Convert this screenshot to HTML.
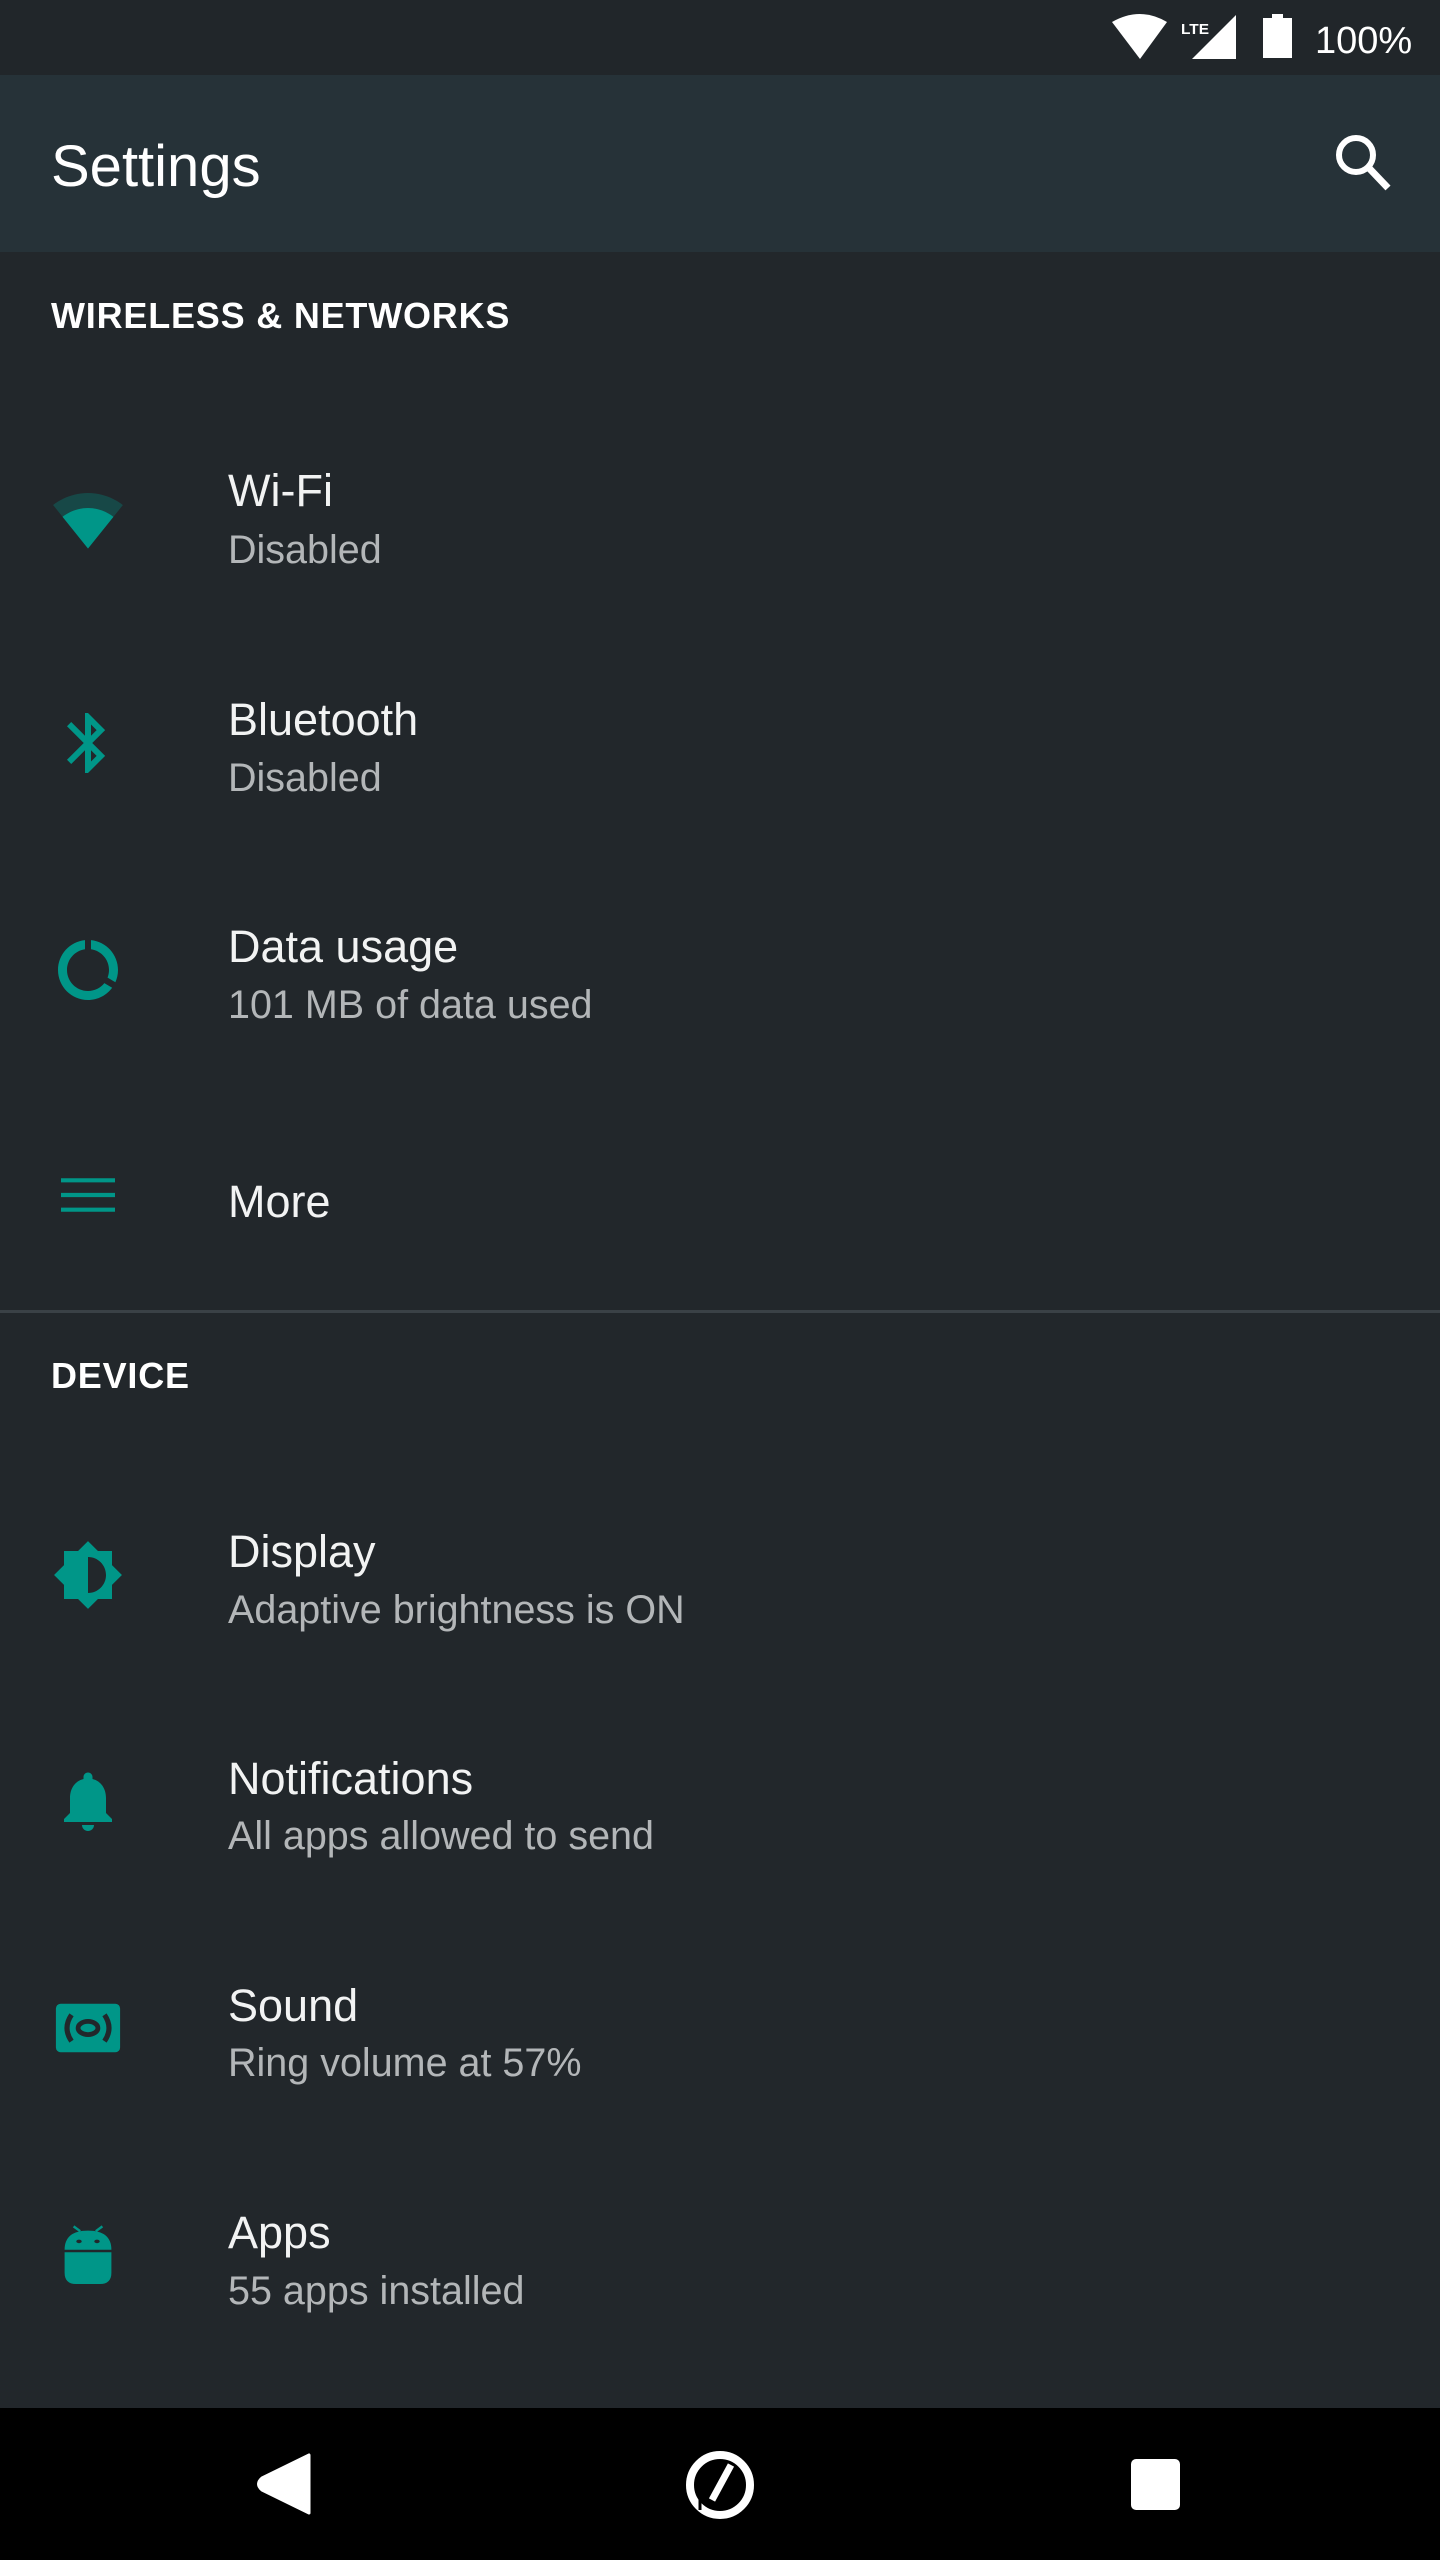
<!DOCTYPE html>
<html><head><meta charset="utf-8"><style>
*{margin:0;padding:0;box-sizing:border-box}
body{width:1440px;height:2560px;background:#22272b;position:relative;overflow:hidden;font-family:"Liberation Sans",sans-serif;color:#fff}
.a{position:absolute;white-space:nowrap}
.t{font-size:45px;color:#f2f3f3;left:228px;line-height:1}
.s{font-size:39.5px;color:#b3b6b8;left:228px;line-height:1;margin-top:4px}
.h{font-size:36px;font-weight:bold;left:51px;line-height:1;letter-spacing:0.8px}
svg.i{position:absolute;left:52px;width:72px;height:72px;fill:#009688}
</style></head><body>
<div class="a" style="left:0;top:0;width:1440px;height:75px;background:#21262a"></div>
<svg class="a" style="left:1100px;top:0" width="340" height="75" viewBox="1100 0 340 75">
<path d="M1112 22 Q1140 6 1167 22 L1140 59 Z" fill="#fff"/>
<text x="1181" y="34" font-family="Liberation Sans" font-weight="bold" font-size="15" fill="#fff" textLength="28" lengthAdjust="spacingAndGlyphs">LTE</text>
<path d="M1236 15 L1236 59 L1192 59 Z" fill="#fff"/>
<rect x="1272" y="14" width="11" height="5" fill="#fff"/><rect x="1263" y="18" width="29" height="40" fill="#fff"/>
<text x="1315" y="53" font-family="Liberation Sans" font-size="38" fill="#fff">100%</text>
</svg>
<div class="a" style="left:0;top:75px;width:1440px;height:177px;background:#263238"></div>
<div class="a" style="left:51px;top:138px;font-size:58px;line-height:1;color:#fff">Settings</div>
<svg class="a" style="left:1320px;top:120px" width="80" height="80" viewBox="1320 120 80 80"><circle cx="1356" cy="155" r="17" fill="none" stroke="#fff" stroke-width="6"/><path d="M1368 167 L1388 188" stroke="#fff" stroke-width="7"/></svg>

<div class="a h" style="top:298px">WIRELESS &amp; NETWORKS</div>

<svg class="i" style="top:484px" viewBox="0 0 24 24"><path opacity=".3" d="M12.01 21.49L23.64 7c-.45-.34-4.93-4-11.64-4C5.28 3 .81 6.66.36 7l11.63 14.49.01.01.01-.01z"/><path d="M3.53 10.95l8.46 10.54.01.01.01-.01 8.46-10.54C20.04 10.62 16.81 8 12 8c-4.81 0-8.04 2.62-8.47 2.95z"/></svg>
<div class="a t" style="top:468px">Wi-Fi</div><div class="a s" style="top:527px">Disabled</div>

<svg class="i" style="top:707px" viewBox="0 0 24 24"><path d="M17.71 7.71L12 2h-1v7.59L6.41 5 5 6.41 10.59 12 5 17.59 6.41 19 11 14.41V22h1l5.71-5.71-4.3-4.29 4.3-4.29zM13 5.83l1.88 1.88L13 9.59V5.83zm1.88 10.46L13 18.17v-3.76l1.88 1.88z"/></svg>
<div class="a t" style="top:697px">Bluetooth</div><div class="a s" style="top:755px">Disabled</div>

<svg class="i" style="top:934px" viewBox="0 0 24 24"><path d="M13 2.05v3.03c3.39.49 6 3.39 6 6.92 0 .9-.18 1.75-.48 2.54l2.6 1.53c.56-1.24.88-2.62.88-4.07 0-5.18-3.95-9.45-9-9.95zM12 19c-3.87 0-7-3.13-7-7 0-3.53 2.61-6.43 6-6.92V2.05c-5.06.5-9 4.76-9 9.95 0 5.52 4.47 10 9.99 10 3.31 0 6.24-1.61 8.06-4.09l-2.6-1.53C16.17 17.98 14.21 19 12 19z"/></svg>
<div class="a t" style="top:924px">Data usage</div><div class="a s" style="top:982px">101 MB of data used</div>

<svg class="i" style="top:1159px" viewBox="0 0 24 24"><path d="M3 17.6h18v-1.4H3zM3 12.7h18v-1.4H3zM3 6.4v1.4h18V6.4z"/></svg>
<div class="a t" style="top:1179px">More</div>

<div class="a" style="left:0;top:1310px;width:1440px;height:3px;background:#3a4146"></div>
<div class="a h" style="top:1358px">DEVICE</div>

<svg class="i" style="top:1539px" viewBox="0 0 24 24"><path fill-rule="evenodd" d="M20 15.31L23.31 12 20 8.69V4h-4.69L12 .69 8.69 4H4v4.69L.69 12 4 15.31V20h4.69L12 23.31 15.31 20H20v-4.69zM12 18V6c3.31 0 6 2.69 6 6s-2.69 6-6 6z"/></svg>
<div class="a t" style="top:1529px">Display</div><div class="a s" style="top:1587px">Adaptive brightness is ON</div>

<svg class="i" style="top:1765px" viewBox="0 0 24 24"><path d="M12 22c1.1 0 2-.9 2-2h-4c0 1.1.89 2 2 2zm6-6v-5c0-3.07-1.64-5.64-4.5-6.32V4c0-.83-.67-1.5-1.5-1.5s-1.5.67-1.5 1.5v.68C7.63 5.36 6 7.92 6 11v5l-2 2v1h16v-1l-2-2z"/></svg>
<div class="a t" style="top:1756px">Notifications</div><div class="a s" style="top:1813px">All apps allowed to send</div>

<svg class="i" style="top:1992px" viewBox="0 0 24 24"><rect x="1.3" y="3.9" width="21.4" height="16.2" rx="1.6"/><ellipse cx="12" cy="12" rx="3.3" ry="2.2" fill="none" stroke="#22272b" stroke-width="1.6"/><path d="M6.5 7.6 Q3.5 12 6.5 16.4" fill="none" stroke="#22272b" stroke-width="1.7"/><path d="M17.5 7.6 Q20.5 12 17.5 16.4" fill="none" stroke="#22272b" stroke-width="1.7"/></svg>
<div class="a t" style="top:1983px">Sound</div><div class="a s" style="top:2040px">Ring volume at 57%</div>

<svg class="i" style="top:2218px" viewBox="0 0 24 24"><path d="M4.2 10.6 Q4.2 4.2 12 4.2 Q19.8 4.2 19.8 10.6Z"/><path d="M4.2 11.4h15.6v6.8q0 3.8-3.8 3.8h-8q-3.8 0-3.8-3.8z"/><path d="M7.2 2.8 L9.4 4.4 M16.8 2.8 L14.6 4.4" stroke="#009688" stroke-width=".8"/><ellipse cx="9" cy="7.8" rx=".9" ry=".6" fill="#22272b"/><ellipse cx="15" cy="7.8" rx=".9" ry=".6" fill="#22272b"/></svg>
<div class="a t" style="top:2210px">Apps</div><div class="a s" style="top:2268px">55 apps installed</div>

<div class="a" style="left:0;top:2408px;width:1440px;height:152px;background:#000"></div>
<svg class="a" style="left:0;top:2408px" width="1440" height="152" viewBox="0 2408 1440 152">
<path d="M309 2455 L309 2513 L262 2490 Q255 2484 262 2478 Z" fill="#fff" stroke="#fff" stroke-width="3" stroke-linejoin="round"/>
<circle cx="720" cy="2485" r="30" fill="none" stroke="#fff" stroke-width="8"/>
<path d="M731 2465 L712 2500" stroke="#fff" stroke-width="7"/>
<path d="M700 2470 L700 2510" stroke="#000" stroke-width="3"/>
<rect x="1131" y="2459" width="49" height="51" rx="5" fill="#fff"/>
</svg>
</body></html>
